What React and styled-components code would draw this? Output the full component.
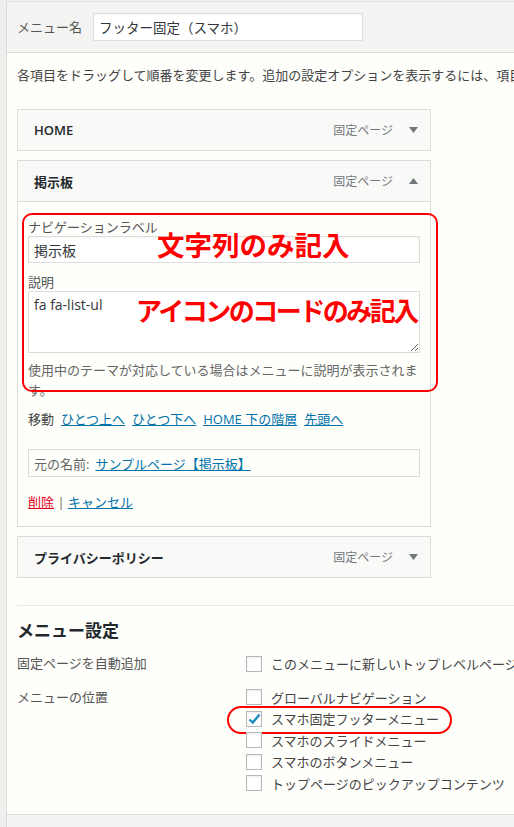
import React from "react";
import styled, { createGlobalStyle } from "styled-components";

const GlobalStyle = createGlobalStyle`
  html, body {
    margin: 0;
    padding: 0;
    overflow: hidden;
  }
  body {
    background: #efefed;
    font-family: "Open Sans", "Noto Sans CJK JP", sans-serif;
    font-size: 13px;
    color: #444;
  }
`;

const Page = styled.div`
  height: 827px;
  box-sizing: border-box;
  padding: 1px 0 0 6px;
  overflow: hidden;
`;

const Panel = styled.div`
  height: 100%;
  display: flex;
  flex-direction: column;
  border-left: 1px solid #dcdcda;
  border-top: 1px solid #e2e2e0;
  background: #fefefb;
  width: 600px;
`;

const Header = styled.div`
  height: 50px;
  flex: none;
  display: flex;
  align-items: center;
  padding: 0 10px;
  background: #f3f3f1;
  border-bottom: 1px solid #dddddb;
`;

const HeaderLabel = styled.label`
  width: 76px;
  color: #555;
  line-height: 20px;
`;

const TextInput = styled.input`
  box-sizing: border-box;
  width: ${(p) => p.$width || "100%"};
  height: ${(p) => p.$height || 27}px;
  border: 1px solid #dddddb;
  background: #fff;
  padding: 0 5px;
  margin: 0;
  font-family: "Open Sans", "Noto Sans CJK JP", sans-serif;
  font-size: ${(p) => p.$size || 14}px;
  color: #32373c;
  outline: none;
  box-shadow: inset 0 1px 2px rgba(0, 0, 0, 0.04);
`;

const TextArea = styled.textarea`
  box-sizing: border-box;
  display: block;
  width: 100%;
  height: 62px;
  border: 1px solid #dddddb;
  background: #fff;
  padding: 3px 5px;
  margin: 0;
  font-family: "Open Sans", "Noto Sans CJK JP", sans-serif;
  font-size: 14px;
  line-height: 20px;
  color: #32373c;
  outline: none;
`;

const Body = styled.div`
  flex: 1;
  padding: 0 10px;
`;

const Intro = styled.p`
  margin: 12px 0 24px;
  line-height: 20px;
  white-space: nowrap;
  color: #444;
`;

const MenuList = styled.div`
  width: 414px;
  display: flex;
  flex-direction: column;
  gap: 9px;
`;

const Item = styled.div`
  border: 1px solid #dcdcda;
  background: #f9f9f7;
`;

const ItemBar = styled.div`
  height: 40px;
  display: flex;
  align-items: center;
  padding: 0 12px 0 16px;
`;

const ItemTitle = styled.span`
  flex: 1;
  font-weight: 600;
  color: #23282d;
`;

const ItemType = styled.span`
  font-size: 12px;
  color: #72777c;
  margin-right: 16px;
`;

const Settings = styled.div`
  position: relative;
  border-top: 1px solid #dcdcda;
  background: #fefefb;
  padding: 16px 10px 14px;
`;

const FieldLabel = styled.label`
  display: block;
  line-height: 18px;
  color: #555;
  margin-top: ${(p) => p.$top || 0}px;
`;

const Help = styled.p`
  margin: 7px 0 0;
  line-height: 20px;
  color: #666;
`;

const MoveRow = styled.div`
  margin-top: 9px;
  line-height: 20px;
  display: flex;
  gap: 7px;
`;

const Link = styled.a`
  color: ${(p) => (p.$danger ? "#e8001c" : "#0073aa")};
  text-decoration: underline;
  cursor: pointer;
`;

const Original = styled.div`
  margin-top: 20px;
  height: 28px;
  box-sizing: border-box;
  border: 1px solid #dddddb;
  padding: 0 5px;
  display: flex;
  align-items: center;
  gap: 6px;
  color: #666;
`;

const Actions = styled.div`
  margin-top: 15px;
  line-height: 20px;
  color: #666;
`;

const NoteFrame = styled.div`
  position: absolute;
  left: 4px;
  top: 11px;
  width: 416px;
  height: 179px;
  box-sizing: border-box;
  border: 2px solid #f00;
  border-radius: 10px;
  pointer-events: none;
`;

const NoteText = styled.span`
  position: absolute;
  left: ${(p) => p.$left}px;
  top: ${(p) => p.$top}px;
  font-family: "Noto Sans CJK JP", sans-serif;
  font-weight: 700;
  font-size: ${(p) => p.$size}px;
  letter-spacing: ${(p) => p.$spacing || 0}px;
  line-height: 1;
  color: #f00;
  white-space: nowrap;
  pointer-events: none;
`;

const Divider = styled.div`
  margin: 27px -10px 0 0;
  border-top: 1px solid #e9e9e7;
`;

const SectionTitle = styled.h3`
  margin: 14px 0 11px;
  font-size: 17px;
  line-height: 22px;
  font-weight: 700;
  color: #23282d;
`;

const SettingRow = styled.div`
  display: grid;
  grid-template-columns: 229px 1fr;
  margin-bottom: ${(p) => p.$gap || 0}px;
`;

const RowLabel = styled.div`
  line-height: 21.5px;
  color: #555;
`;

const Options = styled.div`
  display: flex;
  flex-direction: column;
`;

const Option = styled.label`
  position: relative;
  height: 21.5px;
  display: flex;
  align-items: center;
  gap: 9px;
  white-space: nowrap;
  color: #444;
`;

const Box = styled.span`
  width: 16px;
  height: 16px;
  box-sizing: border-box;
  border: 1px solid #b4b9be;
  background: #fff;
  box-shadow: inset 0 1px 2px rgba(0, 0, 0, 0.08);
  display: flex;
  align-items: center;
  justify-content: center;
  flex: none;
`;

const Ring = styled.span`
  position: absolute;
  left: -19px;
  top: 50%;
  width: 225px;
  height: 28px;
  margin-top: -13px;
  box-sizing: border-box;
  border: 2px solid #f00;
  border-radius: 14px;
  pointer-events: none;
`;

const Footer = styled.div`
  height: 13px;
  flex: none;
  background: #f3f3f1;
  border-top: 1px solid #dcdcda;
`;

function Arrow({ up }) {
  return (
    <svg width="9" height="6" viewBox="0 0 9 6">
      <polygon points={up ? "4.5,0 9,6 0,6" : "0,0 9,0 4.5,6"} fill="#72777c" />
    </svg>
  );
}

function Check({ checked }) {
  return (
    <Box>
      {checked && (
        <svg width="13" height="12" viewBox="0 0 13 12">
          <path d="M1.5 6.5 L4.8 9.6 L11.5 1.5" fill="none" stroke="#1e8cbe" strokeWidth="2.4" />
        </svg>
      )}
    </Box>
  );
}

function MenuItem({ title, open, children }) {
  return (
    <Item>
      <ItemBar>
        <ItemTitle>{title}</ItemTitle>
        <ItemType>固定ページ</ItemType>
        <Arrow up={open} />
      </ItemBar>
      {children}
    </Item>
  );
}

const locations = [
  { label: "グローバルナビゲーション" },
  { label: "スマホ固定フッターメニュー", checked: true },
  { label: "スマホのスライドメニュー" },
  { label: "スマホのボタンメニュー" },
  { label: "トップページのピックアップコンテンツ" },
];

export default function App() {
  return (
    <>
      <GlobalStyle />
      <Page>
        <Panel>
          <Header>
            <HeaderLabel>メニュー名</HeaderLabel>
            <TextInput $width="270px" $height={28} $size={13.5} defaultValue="フッター固定（スマホ）" />
          </Header>

          <Body>
            <Intro>各項目をドラッグして順番を変更します。追加の設定オプションを表示するには、項目の右側にある矢印をクリックしてください。</Intro>

            <MenuList>
              <MenuItem title="HOME" />
              <MenuItem title="掲示板" open>
                <Settings>
                  <FieldLabel>ナビゲーションラベル</FieldLabel>
                  <TextInput defaultValue="掲示板" />
                  <FieldLabel $top={10}>説明</FieldLabel>
                  <TextArea defaultValue="fa fa-list-ul" />
                  <Help>使用中のテーマが対応している場合はメニューに説明が表示されます。</Help>
                  <MoveRow>
                    <span>移動</span>
                    <Link>ひとつ上へ</Link>
                    <Link>ひとつ下へ</Link>
                    <Link>HOME 下の階層</Link>
                    <Link>先頭へ</Link>
                  </MoveRow>
                  <Original>
                    <span>元の名前:</span>
                    <Link>サンプルページ【掲示板】</Link>
                  </Original>
                  <Actions>
                    <Link $danger>削除</Link> | <Link>キャンセル</Link>
                  </Actions>

                  <NoteFrame />
                  <NoteText $left={139} $top={29} $size={27.5}>文字列のみ記入</NoteText>
                  <NoteText $left={118} $top={95} $size={26} $spacing={-2.5}>アイコンのコードのみ記入</NoteText>
                </Settings>
              </MenuItem>
              <MenuItem title="プライバシーポリシー" />
            </MenuList>

            <Divider />
            <SectionTitle>メニュー設定</SectionTitle>

            <SettingRow $gap={12}>
              <RowLabel>固定ページを自動追加</RowLabel>
              <Options>
                <Option>
                  <Check />
                  このメニューに新しいトップレベルページを自動追加
                </Option>
              </Options>
            </SettingRow>

            <SettingRow>
              <RowLabel>メニューの位置</RowLabel>
              <Options>
                {locations.map((loc) => (
                  <Option key={loc.label}>
                    <Check checked={loc.checked} />
                    {loc.label}
                    {loc.checked && <Ring />}
                  </Option>
                ))}
              </Options>
            </SettingRow>
          </Body>

          <Footer />
        </Panel>
      </Page>
    </>
  );
}
